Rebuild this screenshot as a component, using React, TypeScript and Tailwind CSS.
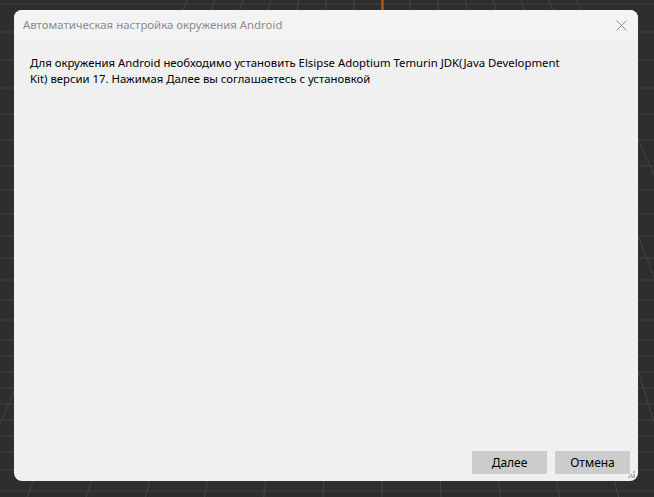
import { ReactElement } from "react"

// perspective floor grid behind the dialog
const Backdrop = (): ReactElement => {
  const vx = 382
  const vy = -441
  const verticals = Array.from({ length: 15 }, (_, i) => vx + (i - 7) * 58)
  const horizontals = [491, 470, 452, 436, 420, 404, 388, 372, 356, 340, 320, 300, 280, 258, 236, 214, 190, 166, 140, 114, 88, 60, 32, 4]
  return (
    <svg className="absolute inset-0" width="654" height="497" viewBox="0 0 654 497">
      <rect width="654" height="497" fill="#2e2e2e" />
      {horizontals.map((y) => (
        <line key={y} x1="0" y1={y} x2="654" y2={y} stroke="#424242" strokeWidth="1" />
      ))}
      {verticals.map((x) => (
        <line key={x} x1={vx} y1={vy} x2={vx + (x - vx) * 1.02} y2={497} stroke="#454545" strokeWidth="1" />
      ))}
      <line x1="382.5" y1="0" x2="382.5" y2="12" stroke="#c2640f" strokeWidth="2" />
    </svg>
  )
}

const CloseIcon = (): ReactElement => (
  <svg width="11" height="11" viewBox="0 0 11 11" className="text-[#8a8a8a]">
    <path d="M0.5 0.5 L10.5 10.5 M10.5 0.5 L0.5 10.5" stroke="currentColor" strokeWidth="1" fill="none" />
  </svg>
)

const Grip = (): ReactElement => (
  <svg width="7" height="7" viewBox="0 0 7 7" className="absolute right-[3px] bottom-[3px]">
    <g fill="#b5b5b5">
      <rect x="5" y="0" width="2" height="2" />
      <rect x="2" y="3" width="2" height="2" />
      <rect x="5" y="3" width="2" height="2" />
      <rect x="0" y="5" width="2" height="2" />
      <rect x="3" y="5" width="2" height="2" />
      <rect x="5" y="5" width="2" height="2" />
    </g>
  </svg>
)

const App = (): ReactElement => {
  return (
    <div className="relative w-[654px] h-[497px] overflow-hidden" style={{ fontFamily: '"Noto Sans", "Open Sans", sans-serif' }}>
      <Backdrop />
      <div className="relative pt-[10px] pl-[14px]">
        <div className="relative flex flex-col w-[624px] h-[471px] rounded-[8px] overflow-hidden bg-[#f0f0f0]">
          <header className="flex items-center justify-between h-[30px] pl-[9px] pr-[11px] bg-[#f3f3f3]">
            <span className="text-[11.4px] text-[#8c8c8c]">Автоматическая настройка окружения Android</span>
            <CloseIcon />
          </header>
          <p className="pt-[15px] pl-[16px] text-[11.35px] leading-[16px] text-black">
            Для окружения Android необходимо установить Elsipse Adoptium Temurin JDK(Java Development
            <br />
            Kit) версии 17. Нажимая Далее вы соглашаетесь с установкой
          </p>
          <div className="mt-auto flex justify-end gap-[8px] pr-[8px] pb-[7px]">
            <button className="w-[75px] h-[23px] bg-[#cccccc] text-[12px] text-black">Далее</button>
            <button className="w-[75px] h-[23px] bg-[#cccccc] text-[12px] text-black">Отмена</button>
          </div>
          <Grip />
        </div>
      </div>
    </div>
  )
}

export default App
